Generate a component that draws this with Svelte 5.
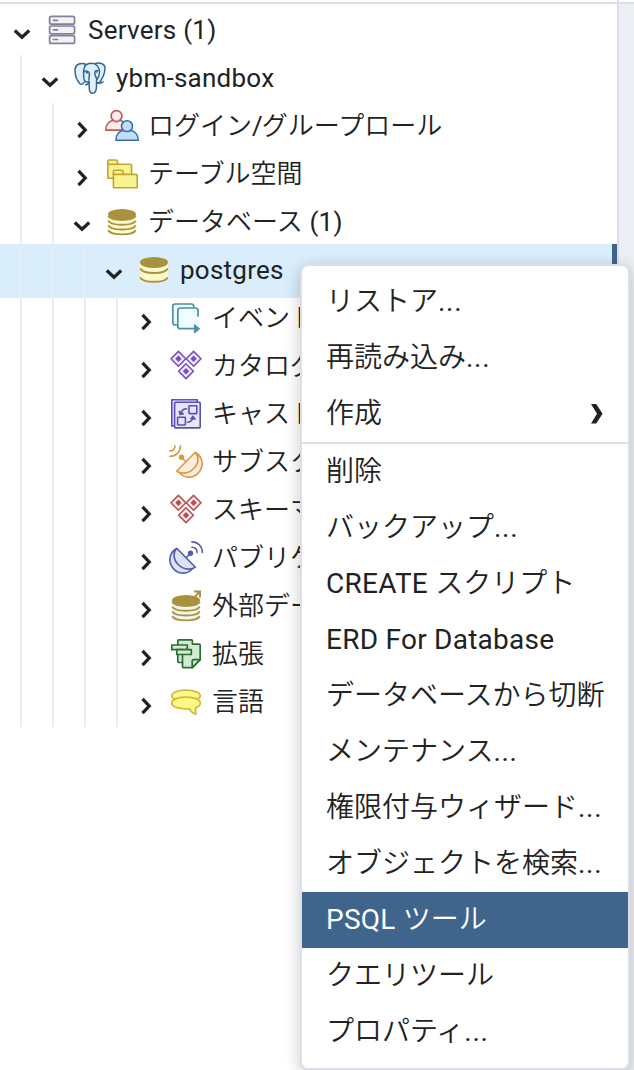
<script>
  const tree = [
    { depth: 0, x: 12, open: true, icon: 'servers', label: 'Servers (1)' },
    { depth: 1, x: 40, open: true, icon: 'elephant', label: 'ybm-sandbox' },
    { depth: 2, x: 72, icon: 'roles', label: 'ログイン/グループロール' },
    { depth: 2, x: 72, icon: 'folders', label: 'テーブル空間' },
    { depth: 2, x: 72, open: true, icon: 'databases', label: 'データベース (1)' },
    { depth: 3, x: 104, open: true, icon: 'database', label: 'postgres', selected: true },
    { depth: 4, x: 136, icon: 'event', label: 'イベント' },
    { depth: 4, x: 136, icon: 'catalog', label: 'カタログ' },
    { depth: 4, x: 136, icon: 'cast', label: 'キャスト' },
    { depth: 4, x: 136, icon: 'subscription', label: 'サブスク' },
    { depth: 4, x: 136, icon: 'schema', label: 'スキーマ' },
    { depth: 4, x: 136, icon: 'publication', label: 'パブリケ' },
    { depth: 4, x: 136, icon: 'foreign', label: '外部デー' },
    { depth: 4, x: 136, icon: 'extension', label: '拡張' },
    { depth: 4, x: 136, icon: 'language', label: '言語' }
  ];
  const groups = [
    [{ label: 'リストア...' }, { label: '再読み込み...' }, { label: '作成', sub: true }],
    [
      { label: '削除' },
      { label: 'バックアップ...' },
      { label: 'CREATE スクリプト' },
      { label: 'ERD For Database' },
      { label: 'データベースから切断' },
      { label: 'メンテナンス...' },
      { label: '権限付与ウィザード...' },
      { label: 'オブジェクトを検索...' },
      { label: 'PSQL ツール', active: true },
      { label: 'クエリツール' },
      { label: 'プロパティ...' }
    ]
  ];
  // Splits a label into runs of Latin and Japanese text.
  const runs = (label) => label.match(/[\x20-\x7e]+|[^\x20-\x7e]+/g);
  const isLatin = (run) => /^[\x20-\x7e]/.test(run);
</script>

{#snippet text(label)}
  <span class="label">{#each runs(label) as run}<span class:latin={isLatin(run) && run !== '/'} class:slash={run === '/'} class:dots={run === '...'}>{run}</span>{/each}</span>
{/snippet}

{#snippet diamonds(stroke, fill)}
  <g {stroke} {fill} stroke-width="1.6">
    {#each [[8.4, 8.8], [23.6, 8.8], [16, 21.2]] as [cx, cy]}
      <path d="M{cx} {cy - 7.4}l7.4 7.4l-7.4 7.4l-7.4 -7.4z" />
      <path d="M{cx} {cy - 2.2}l2.2 2.2l-2.2 2.2l-2.2 -2.2z" fill={stroke} />
    {/each}
  </g>
{/snippet}

{#snippet dish(stroke, fill)}
  <g {stroke} stroke-width="1.6">
    <path d="M25.700 6.700c6.500 3.500 8.500 12.300 4 18.500c-4.500 6.500-13.500 8.500-20 1.800z" {fill} />
    <path d="M25.300 6.300c3.800 4.500 3.700 10.700-1 15.700c-5 5.200-11.600 6.500-17.700 3.200z" {fill} />
    <path d="M11.500 11.300l3.900 4" />
    <circle cx="11.500" cy="11.300" r="1.900" fill={stroke} />
  </g>
{/snippet}

{#snippet glyph(name)}
  <svg class="icon" viewBox="0 0 32 32" fill="none" stroke-linejoin="round" stroke-linecap="round">
    {#if name === 'servers'}
      <g stroke="#84809c" stroke-width="1.7" fill="#f2f2f2">
        {#each [2.4, 12, 21.6] as y}
          <rect x="3.6" {y} width="25" height="7.8" rx="2" />
          <path d="M7.5 {y + 3.9}h4" />
        {/each}
      </g>
    {:else if name === 'elephant'}
      <g stroke="#336791" stroke-width="1.5" fill="#dff0fb">
        <path d="M20 2C25 -.2 31.3 1 31 7c-.2 5-3 10-5.200 13.400c-1.500 1-3.500 .4-4.600-1.600z" />
        <path d="M11 1.800C5.500 .5 .8 2.600 1 8.800c.1 4.500 2.200 10 4.700 12.700c2 1.600 3.800 .2 5.300-2.500z" />
        <path d="M11.400 3.400c3-2.800 9.300-2.800 11.700 .2c3.300 4 3.300 9.500-.5 14.200c-.4 2 .3 4.500-.2 8.200c-.4 3.600-1.500 5.300-3.900 5.300c-2.300 0-3-1.700-3.200-4.400l-.3-7c-3 .8-5.200-.8-5.300-4.300c-.2-4-.6-9.200 1.700-12.200z" />
        <path d="M10 9.800c2.400-1.400 5.100-.7 5.400 2c.2 2-.6 3.300-.5 6.200M23.900 8.800c-2.300-.6-3.300 .2-3.100 2.600c.2 2.500 1.300 4.300 2.100 6M15 19.400c-.2 2.300-1.500 3.300-3.500 3.300M22.800 20.700c2 .7 4.500 .4 6.300-.8" fill="none" />
        <path d="M12.400 10.700h1.200M22.300 10h.6" />
      </g>
    {:else if name === 'roles'}
      <path d="M-.3 20.100c0-5.500 3.600-8.900 7.400-9.900a5.400 5.400 0 1 1 6.800 0c3.800 1 6.400 4.400 6.400 9.900z" stroke="#c05956" stroke-width="1.6" fill="#fcebeb" />
      <path d="M7 10.200c2 1.600 5 1.600 7 0" stroke="#c05956" stroke-width="1.600" />
      <path d="M9.900 30.200c0-5.500 3.600-8.900 7.400-9.900a5.500 5.500 0 1 1 7.400 0c3.800 1 7.600 4.400 7.600 9.900z" stroke="#346bc2" stroke-width="1.600" fill="#c4def1" />
      <path d="M17.300 20.300c2 1.600 5.400 1.600 7.400 0" stroke="#346bc2" stroke-width="1.600" />
    {:else if name === 'folders'}
      <g stroke="#c5a331" stroke-width="1.600" fill="#f6f391">
        <path d="M1.900 20.300V3q0-1 1-1h7q1 0 1.300 1l.6 3.200h13q.8 0 .8 .8v13.300z" />
        <path d="M2 6.200h10" />
        <path d="M7.400 29.700V13.200q0-1 1-1h7q1 0 1.300 1l.7 3.200h13q.8 0 .8 .8v12.500z" />
        <path d="M7.500 16.400h10" />
      </g>
    {:else if name === 'databases' || name === 'foreign'}
      {@const pale = name === 'foreign' ? '#f2f2ee' : '#fdfad2'}
      {@const top = name === 'foreign' ? 10.300 : 8.300}
      <path d="M2 {top}v16c1 5.500 27 5.500 28 0v-16z" fill={pale} />
      <ellipse cx="16" cy={top} rx="14" ry="5.200" fill="#a8923e" />
      {#each [1.500, 6.300, 11.100, 15.900] as dy}
        <path d="M2.200 {top + dy}c3 5.500 24.600 5.500 27.600 0" stroke="#a8923e" stroke-width="1.900" stroke-linecap="butt" />
      {/each}
      {#if name === 'foreign'}
        <path d="M24 7.500l5.500-5.500M24 1.500h6v6" stroke="#a8923e" stroke-width="1.900" stroke-linecap="butt" stroke-linejoin="miter" />
      {/if}
    {:else if name === 'database'}
      <path d="M2 8.500v15.500c1 6.200 27 6.200 28 0v-15.500z" fill="#fbf8cf" />
      <ellipse cx="16" cy="8.500" rx="14" ry="5.500" fill="#a8923e" />
      {#each [14.500, 23.300] as y}
        <path d="M2.200 {y}c3 6 24.600 6 27.600 0" stroke="#a8923e" stroke-width="1.900" stroke-linecap="butt" />
      {/each}
    {:else if name === 'event'}
      <g stroke="#4b90a3" stroke-width="1.700">
        <path d="M7.800 23h-2.500q-2.500 0-2.500-2.500v-16q0-2.500 2.500-2.500h16q2.500 0 2.500 2.500v2" fill="#effdff" />
        <path d="M28 14v-5.500q0-2.500-2.500-2.500h-15.200q-2.500 0-2.500 2.500v15.700q0 2.500 2.500 2.500h13.500l4.200-4z" fill="#effdff" stroke="none" />
        <path d="M28 14v-5.500q0-2.500-2.500-2.500h-15.200q-2.500 0-2.500 2.500v15.700q0 2.500 2.500 2.500h13.500" />
        <path d="M24.700 22.800l5 4l-5 4z" fill="#4b90a3" stroke-width="1" />
      </g>
    {:else if name === 'catalog'}
      {@render diamonds('#7950be', '#f0e8fb')}
    {:else if name === 'schema'}
      {@render diamonds('#b75050', '#fbeaea')}
    {:else if name === 'cast'}
      <g stroke="#5a51b3" stroke-width="1.600">
        <path d="M4.500 28H1.800V1.800h25.500V4.500" fill="#e6e5fa" />
        <rect x="4.600" y="4.300" width="25.600" height="25.600" rx="1" fill="#e6e5fa" />
        <rect x="19" y="7.800" width="7.800" height="7.800" rx=".6" />
        <rect x="7.600" y="19.200" width="7.800" height="7.800" rx=".6" />
        <path d="M16.500 10.700c-3 .1-4.800 1.600-5.100 4" />
        <path d="M17.500 24.200c3-.1 4.800-1.600 5.300-4.500" />
        <path d="M9 13.300l.8 3.600l3.800-1z" fill="#5a51b3" stroke-width="1" />
        <path d="M20.300 20.500l2.800-2.700l2.200 3.200z" fill="#5a51b3" stroke-width="1" />
      </g>
    {:else if name === 'subscription'}
      {@render dish('#df963b', '#fbeee0')}
      <path d="M-.2 4.900c3.300 .2 5.300-1.900 5.200-5.200M-.2 10.300c6.200 .1 10.700-4.500 10.600-10.600" stroke="#df963b" stroke-width="1.600" />
    {:else if name === 'publication'}
      <g transform="translate(32 0) scale(-1 1)">{@render dish('#4e5eae', '#dfe2f2')}</g>
      <path d="M21.900 5.300c3.200 .1 5.200 2.200 5.200 5.300M21.900 -.1c6.200 .1 10.500 4.500 10.500 10.600" stroke="#4e5eae" stroke-width="1.600" />
    {:else if name === 'extension'}
      <g stroke="#2f6b35" stroke-width="1.700" fill="#d0ebd1">
        <path d="M7.800 2.800q0-1 1-1h12.600q1 0 1 1v3.400h6.800q1 0 1 1v14.500l-8 8H13.500q-1 0-1-1V24.500H8.800q-1 0-1-1z" />
        <rect x="1.800" y="7" width="15.500" height="4.700" />
        <rect x="6.800" y="11.700" width="14.500" height="4.800" />
        <path d="M12.500 16.500v8M22.200 29.700v-6.500q0-1.500 1.500-1.500h6.500z" />
      </g>
    {:else if name === 'language'}
      <g stroke="#d1b23b" stroke-width="1.600" fill="#fdf983">
        <ellipse cx="16" cy="9.700" rx="14.300" ry="5.700" />
        <path d="M1.700 17c0-3.500 6.300-6 14.300-6s14.300 2.500 14.300 6c0 2-1.800 3.700-4.600 4.700c-.4 2.600-.2 4.300 .2 6.400c-2.700-.7-5-2.500-6.400-5.300c-9 .7-17.800-1.300-17.800-5.800z" />
      </g>
    {/if}
  </svg>
{/snippet}

<div class="page">
  <div class="strip"></div>
  <div class="panes">
    <div class="tree">
      {#each tree as node}
        <div class="row" class:selected={node.selected}>
          <div class="guides">
            {#each Array(node.depth) as _}<i></i>{/each}
          </div>
          <div class="content" style="padding-left: {node.x}px">
            <svg class="chevron" class:open={node.open} viewBox="0 0 20 20"><path d="M6.500 2.800l6.700 7.200l-6.700 7.200" /></svg>
            {@render glyph(node.icon)}
            {@render text(node.label)}
          </div>
        </div>
      {/each}
    </div>
    <div class="side"></div>
  </div>

  <div class="menu">
    {#each groups as group}
      <div class="group">
        {#each group as item}
          <div class="item" class:active={item.active}>
            {@render text(item.label)}
            {#if item.sub}
              <svg class="more" viewBox="0 0 14 22"><path d="M1 1h5.200l6.400 9.800l-6.400 9.700H1l6-9.700z" /></svg>
            {/if}
          </div>
        {/each}
      </div>
    {/each}
  </div>
</div>

<style>
  :global(body) { background: #fff; overflow: hidden; }
  .page {
    position: relative;
    display: flex;
    flex-direction: column;
    width: 634px;
    height: 1070px;
    overflow: hidden;
    color: #222;
    font-family: Roboto, "Noto Sans CJK JP DemiLight", "Noto Sans CJK JP Light", "Noto Sans CJK JP", sans-serif;
  }
  .strip { height: 2px; width: 617px; border-right: 2px solid #dddfe6; flex: none; }
  .panes { display: flex; flex: 1; border-top: 2px solid #dddfe6; }
  .tree { width: 617px; padding-top: 3px; box-sizing: border-box; overflow: hidden; }
  .side { flex: 1; background: #ebeef3; border-left: 2px solid #dddfe6; }
  .row { position: relative; height: 48px; }
  .row.selected::before {
    content: "";
    position: absolute;
    inset: -3px 0 -3px 0;
    background: #daedfb;
    border-right: 5px solid #40658c;
  }
  .guides { position: absolute; inset: 0; display: flex; gap: 30px; padding-left: 20px; }
  .guides i { width: 2px; background: #e9ecf2; }
  .content { position: relative; display: flex; align-items: center; height: 46px; }
  .chevron { width: 20px; height: 20px; flex: none; margin-top: 8px; fill: none; stroke: #222; stroke-width: 3.300; }
  .chevron.open { transform: rotate(90deg); }
  .icon { width: 32px; height: 32px; flex: none; margin-left: 14px; overflow: visible; }
  .label { white-space: nowrap; }
  .content .label { margin-left: 10px; font-size: 26px; line-height: 46px; }
  .latin { letter-spacing: 0.25px; }
  .slash { letter-spacing: -1px; }
  .dots { letter-spacing: 0.7px; }
  .menu {
    position: absolute;
    left: 300px;
    top: 264px;
    width: 326px;
    padding: 8px 0;
    border: 2px solid #dddfe6;
    border-radius: 8px;
    background: #fff;
    box-shadow: 0 4px 16px rgba(0, 0, 0, 0.22);
  }
  .group + .group { border-top: 2px solid #dddfe6; }
  .item {
    display: flex;
    align-items: center;
    justify-content: space-between;
    height: 56px;
    padding: 0 24px;
    font-size: 28px;
    line-height: 54px;
    white-space: nowrap;
  }
  .item.active { background: #40658c; color: #fff; }
  .more { width: 14px; height: 22px; fill: #222; }
</style>
